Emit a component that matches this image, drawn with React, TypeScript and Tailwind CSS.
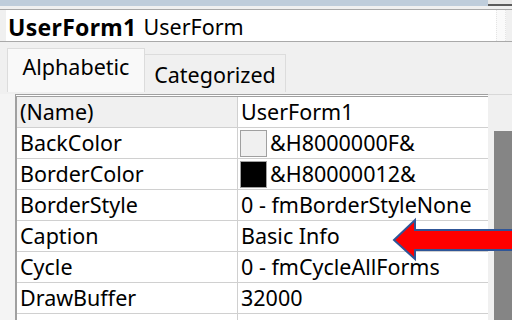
import React from "react";

type Prop = {
  name: string;
  value: string;
  swatch?: string;
  selected?: boolean;
};

const props: Prop[] = [
  { name: "(Name)", value: "UserForm1", selected: true },
  { name: "BackColor", value: "&H8000000F&", swatch: "bg-[#f0f0f0]" },
  { name: "BorderColor", value: "&H80000012&", swatch: "bg-black" },
  { name: "BorderStyle", value: "0 - fmBorderStyleNone" },
  { name: "Caption", value: "Basic Info" },
  { name: "Cycle", value: "0 - fmCycleAllForms" },
  { name: "DrawBuffer", value: "32000" },
  { name: "", value: "" },
];

function PropRow({ p }: { p: Prop }) {
  return (
    <div className="flex h-[31px] shrink-0 border-b border-[#d0d0d0]">
      <div
        className={`w-[221px] shrink-0 border-r border-[#d0d0d0] pl-[3px] leading-[30px] ${
          p.selected ? "bg-[#f0f0f0]" : "bg-white"
        }`}
      >
        {p.name}
      </div>
      <div className="flex flex-1 items-center bg-white pl-[2px] leading-[30px]">
        {p.swatch && (
          <span
            className={`mr-[3px] h-[27px] w-[27px] shrink-0 border border-[#a0a0a0] ${p.swatch}`}
          />
        )}
        <span className={p.swatch ? "" : "pl-[1px]"}>{p.value}</span>
      </div>
    </div>
  );
}

export default function App() {
  return (
    <div
      className="relative flex h-[320px] w-[512px] flex-col overflow-hidden bg-[#f0f0f0] text-[21.5px] text-black"
      style={{ fontFamily: '"Noto Sans", "Open Sans", sans-serif' }}
    >
      {/* window edge */}
      <div className="flex h-[6px] shrink-0">
        <div className="flex-1 bg-[#bfcddb]" />
        <div className="w-[24px] border-b-2 border-[#5c5c5c] bg-[#e8e8e8]" />
      </div>

      {/* object combo */}
      <div className="mt-[3px] flex h-[33px] shrink-0 border-y border-[#a9a9a9]">
        <div className="w-[6px] bg-[#f0f0f0]" />
        <div className="flex w-[490px] items-center bg-white pl-[2px] pt-[3px] leading-none">
          <span className="text-[23px] font-bold tracking-[0.3px]">UserForm1</span>
          <span className="ml-[7px] text-[21.5px]">UserForm</span>
        </div>
        <div className="w-[10px] border-x border-dotted border-[#e4e4e4] bg-[#fafafa]" />
      </div>

      {/* tabs */}
      <div className="mt-[6px] flex h-[44px] shrink-0 items-end pl-[7px]">
        <div className="flex h-[44px] w-[138px] items-start justify-center border-x border-t border-[#dcdcdc] bg-[#f9f9f9] pt-[5px] leading-[26px]">
          Alphabetic
        </div>
        <div className="flex h-[38px] w-[141px] items-start justify-center border-r border-t border-[#dcdcdc] bg-[#f0f0f0] pt-[7px] leading-[26px]">
          Categorized
        </div>
      </div>

      {/* grid + scrollbar */}
      <div className="mt-[2px] flex min-h-0 flex-1">
        <div className="w-[15px] shrink-0 bg-[#f4f4f4]" />
        <div className="flex w-[473px] shrink-0 flex-col border-l-2 border-t-[3px] border-double border-[#a0a0a0] bg-white">
          {props.map((p, i) => (
            <PropRow key={i} p={p} />
          ))}
        </div>
        <div className="flex flex-1 flex-col border-t border-[#d8d8d8] bg-[#f0f0f0] pl-[6px] pt-[36px]">
          <div className="flex-1 bg-[#858585]" />
        </div>
      </div>

      {/* annotation arrow */}
      <svg
        className="absolute left-[390px] top-[217px]"
        width="124"
        height="48"
        viewBox="0 0 124 48"
      >
        <polygon
          points="4,23 25,3 25,13 130,13 130,33 25,33 25,42"
          fill="#ff0000"
          stroke="#2f5597"
          strokeWidth="2"
          strokeLinejoin="miter"
        />
      </svg>
    </div>
  );
}
